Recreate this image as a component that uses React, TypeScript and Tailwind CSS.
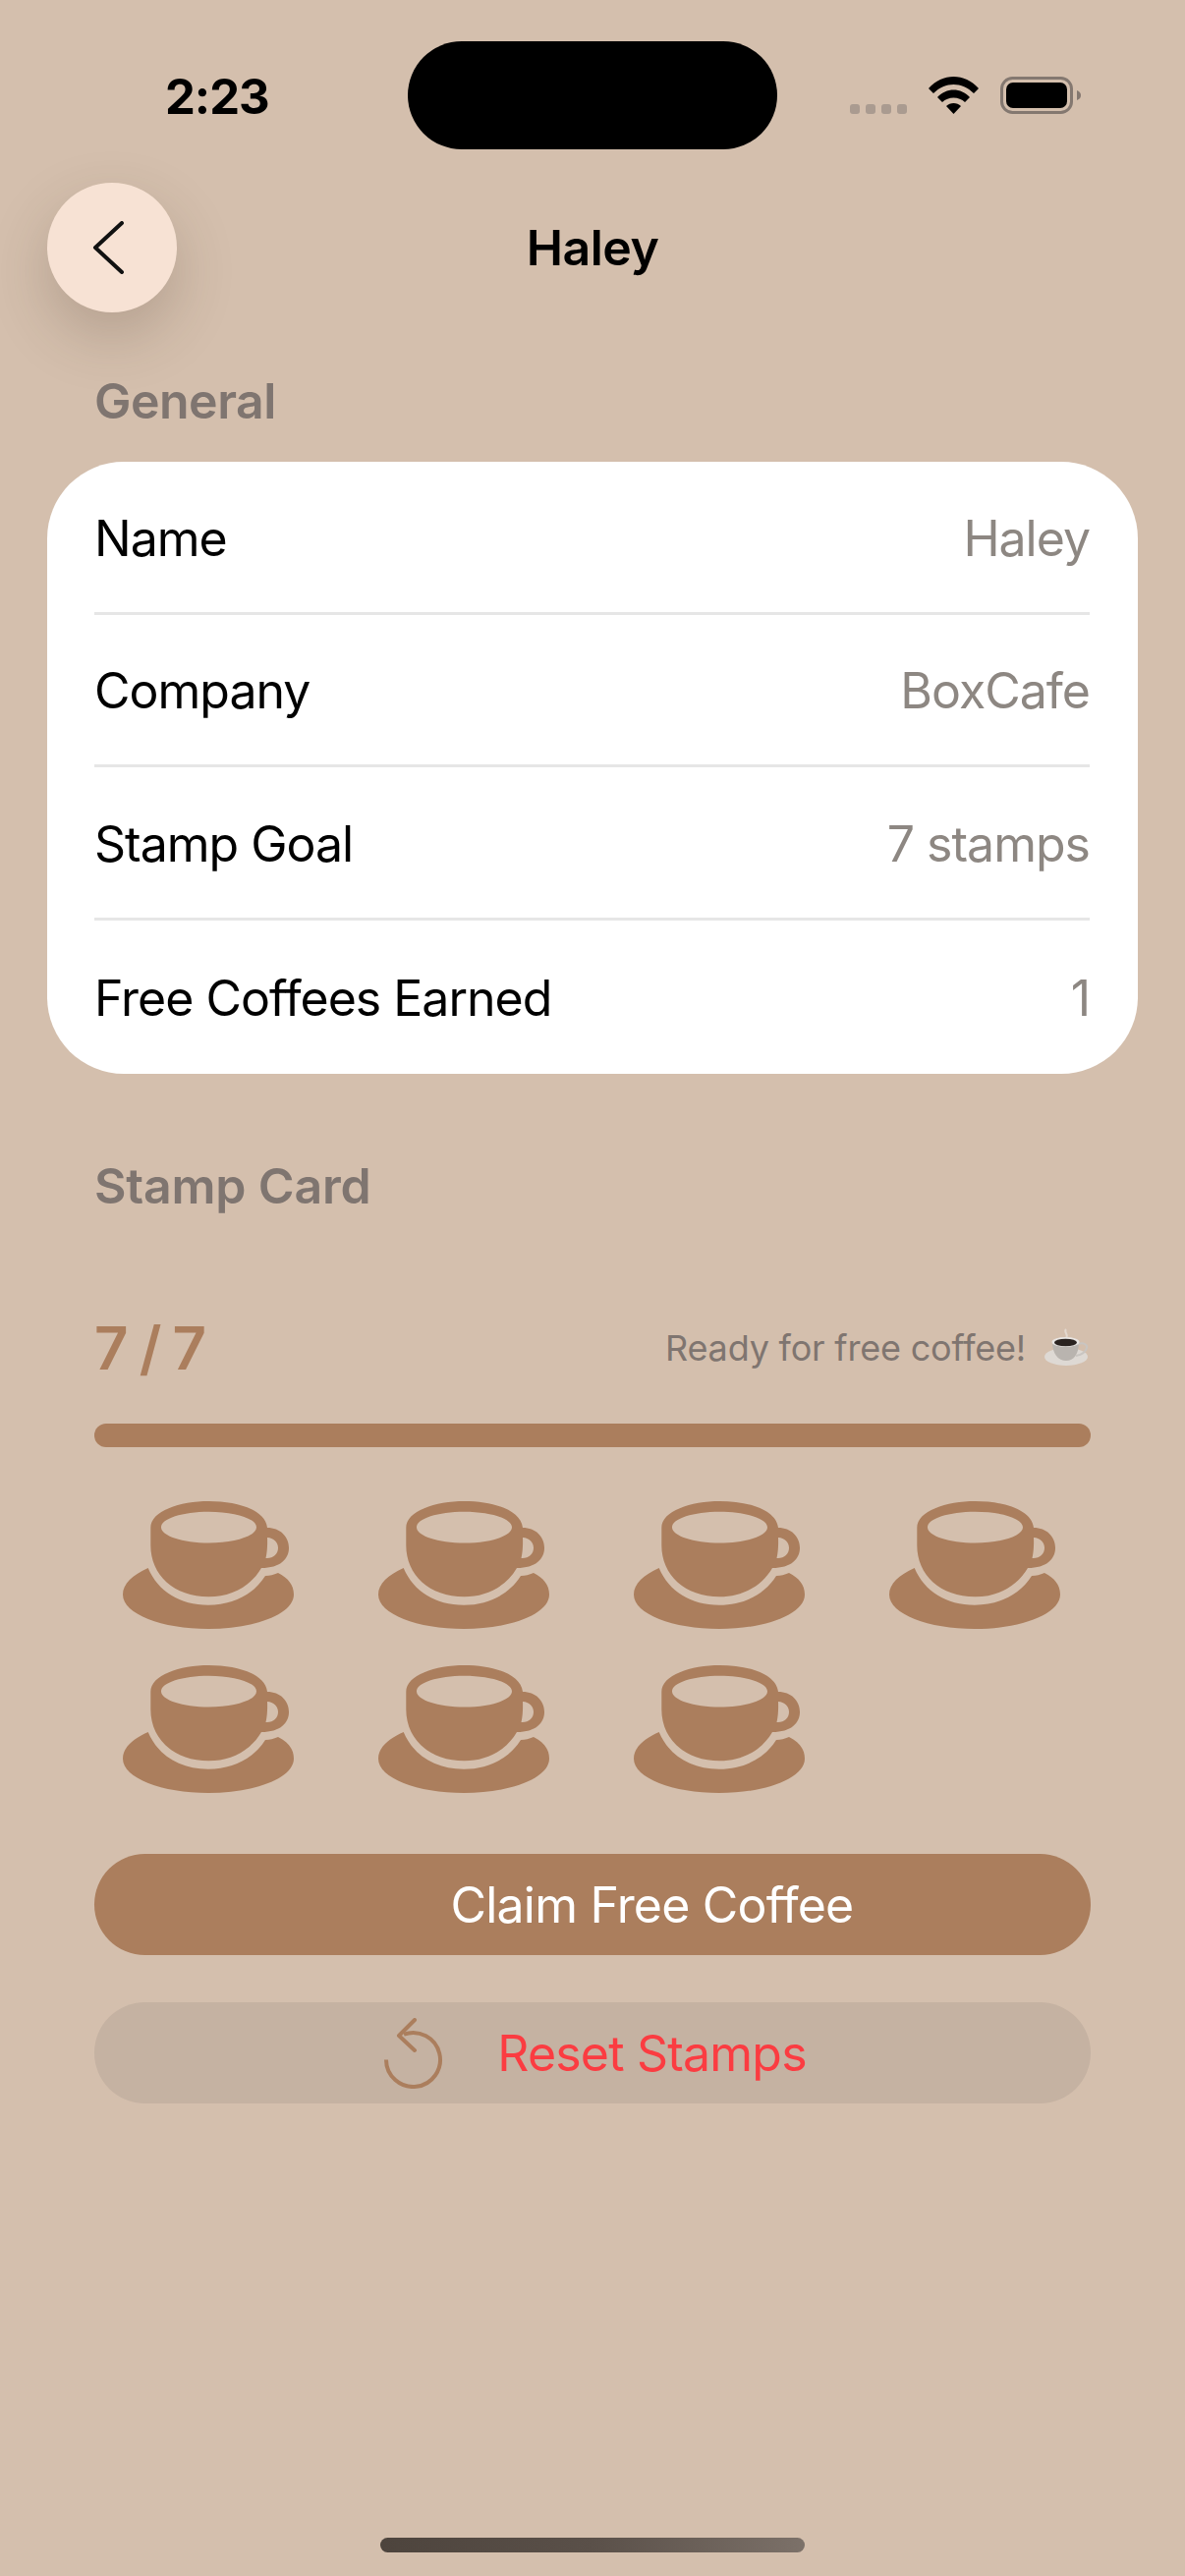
import { ReactNode } from "react";

const rows = [
  { label: "Name", value: "Haley" },
  { label: "Company", value: "BoxCafe" },
  { label: "Stamp Goal", value: "7 stamps" },
  { label: "Free Coffees Earned", value: "1" },
];

function Cup() {
  return (
    <svg viewBox="0 0 174 130" className="h-[130px] w-[174px] fill-[#ab7e5d]">
      <path d="M25.7 68C10 75 0 84 0 95C0 115 40 130 87 130C134 130 174 115 174 95C174 85 168 78 158 73C153 75 150 76 145 76C133 95 112 105.7 87 105.7C58 105.7 36 92 25.7 68Z" />
      <path
        fillRule="evenodd"
        d="M28.3 27C28.3 10 58 0 87.5 0C117 0 145 9 147 27C160 27 169 36 169 47.500C169 59 160 68 141 68C130 87 110 97.300 87.500 97.300C52 97.300 28.300 75 28.300 45ZM39 26.500C39 35.300 60.700 42.500 87.500 42.500C114.300 42.500 136 35.300 136 26.500C136 17.700 114.300 10.700 87.500 10.700C60.700 10.700 39 17.700 39 26.500ZM147 37C147.300 44 147 51 145.500 58C153 58.500 158 54 158 47.500C158 41.500 153.500 37.500 147 37Z"
      />
    </svg>
  );
}

function CoffeeEmoji() {
  return (
    <svg viewBox="0 0 46 40" className="h-[40px] w-[46px]">
      <path d="M23 1c-3 3 3 5 0 9" fill="none" stroke="#e3d8ce" strokeWidth="2" />
      <ellipse cx="23" cy="29" rx="22" ry="9" fill="#ded9d4" />
      <path d="M9 14h27c0 12-5 19-13 19S9 26 9 14Z" fill="#b9b4af" />
      <path d="M35 16c6-2 10 1 9 4-1 4-6 7-11 8" fill="none" stroke="#c9c5c1" strokeWidth="2" />
      <ellipse cx="22.500" cy="14" rx="14" ry="5" fill="#e8e5e2" />
      <ellipse cx="22.500" cy="14.500" rx="11.500" ry="3.800" fill="#2a2320" />
    </svg>
  );
}

function ActionButton({ bg, text, icon, children }: { bg: string; text: string; icon?: ReactNode; children: string }) {
  return (
    <button className={`flex h-[103px] w-full items-center justify-center gap-[55px] rounded-full pl-[6px] text-[50px] tracking-[-0.8px] ${bg} ${text}`}>
      <span className="flex h-[72px] w-[60px] items-center justify-center">{icon}</span>
      <span className="pt-[1px]">{children}</span>
    </button>
  );
}

export default function App() {
  return (
    <div className="flex min-h-[2622px] flex-col bg-[#d4bfad] font-['Inter',sans-serif] text-black">
      {/* status bar */}
      <div className="grid h-[186px] grid-cols-[1fr_376px_1fr] items-start pt-[42px]">
        <span className="mt-[27px] pl-[168px] text-[49px] leading-[60px] font-bold tracking-[-1px]">2:23</span>
        <div className="h-[110px] rounded-[55px] bg-black" />
        <div className="mt-[36px] flex items-end justify-end pr-[106px]">
          <div className="mr-[22px] flex gap-[6px]">
            {[0, 1, 2, 3].map((i) => (
              <span key={i} className="h-[10px] w-[10px] rounded-[3px] bg-[#aa9b90]" />
            ))}
          </div>
          <svg viewBox="0 0 51 38" className="mr-[22px] h-[38px] w-[51px]">
            <path d="M0 12C14-4 37-4 51 12L46 17C34 5 17 5 5 17Z" />
            <path d="M9 21C18 11 33 11 42 21L37 26C31 20 20 20 14 26Z" />
            <path d="M18 30C22 26 29 26 33 30L25.500 38Z" />
          </svg>
          <svg viewBox="0 0 82 38" className="h-[38px] w-[82px]">
            <rect x="1.500" y="1.500" width="71" height="35" rx="11" fill="none" stroke="#847870" strokeWidth="3" />
            <rect x="6" y="6" width="62" height="26" rx="7" />
            <path d="M78 14c3 1 4 3 4 5s-1 4-4 5Z" fill="#847870" />
          </svg>
        </div>
      </div>

      {/* nav */}
      <div className="flex h-[132px] items-center justify-between px-[48px]">
        <button className="flex h-[132px] w-[132px] items-center justify-center rounded-full bg-[#f7e2d4] shadow-[0_24px_60px_rgba(70,50,35,0.22)]">
          <svg viewBox="0 0 34 54" className="mr-[8px] h-[54px] w-[34px] fill-none stroke-[#111] stroke-[4px]">
            <path d="M31 2 4 27l27 25" strokeLinecap="round" strokeLinejoin="round" />
          </svg>
        </button>
        <h1 className="text-[50px] font-semibold tracking-[-0.5px]">Haley</h1>
        <div className="w-[132px]" />
      </div>

      <h2 className="mt-[60px] px-[96px] text-[50px] leading-[60px] font-semibold tracking-[-0.5px] text-[#7f7570]">General</h2>

      <div className="mx-[48px] mt-[32px] h-[623px] rounded-[78px] bg-white pr-[49px] pl-[48px]">
        {rows.map((row, i) => (
          <div key={row.label} className={`flex h-[155.500px] items-center justify-between pt-[4px] text-[50px] tracking-[-1px] ${i < 3 ? "border-b-[3px] border-[#e6e6e6]" : ""}`}>
            <span>{row.label}</span>
            <span className="text-[#8d8782]">{row.value}</span>
          </div>
        ))}
      </div>

      <h2 className="mt-[84px] px-[96px] text-[50px] leading-[60px] font-semibold tracking-[-0.2px] text-[#7f7570]">Stamp Card</h2>

      <div className="mt-[98px] flex h-[74px] items-center justify-between px-[96px]">
        <span className="text-[60px] font-semibold tracking-[-2px] text-[#ab7e5d]">7 / 7</span>
        <span className="flex items-center gap-[18px] pr-[2px] text-[36px] tracking-[-0.2px] text-[#7f7570]">
          Ready for free coffee!
          <CoffeeEmoji />
        </span>
      </div>

      <div className="mx-[96px] mt-[40px] h-[24px] rounded-full bg-[#ab7e5d]" />

      <div className="mt-[55px] grid grid-cols-[repeat(4,174px)] gap-x-[86px] gap-y-[37px] pl-[125px]">
        {Array.from({ length: 7 }).map((_, i) => (
          <Cup key={i} />
        ))}
      </div>

      <div className="mt-[62px] flex flex-col gap-[48px] px-[96px]">
        <ActionButton bg="bg-[#ab7e5d]" text="text-white">Claim Free Coffee</ActionButton>
        <ActionButton
          bg="bg-[#c5b2a2]"
          text="text-[#fb3c41]"
          icon={
            <svg viewBox="0 0 60 72" className="h-[72px] w-[60px] fill-none stroke-[#ab7e5d] stroke-[4px]">
              <path d="M20 16.700A27.500 27.500 0 1 1 2 42.500" />
              <path d="M31 2 15 18l16 15" strokeLinecap="round" strokeLinejoin="round" />
            </svg>
          }
        >
          Reset Stamps
        </ActionButton>
      </div>

      <div className="mt-auto mb-[24px] flex justify-center">
        <div className="h-[15px] w-[432px] rounded-full bg-gradient-to-r from-[#4d443d] via-[#5a5049] to-[#7c7169]" />
      </div>
    </div>
  );
}
